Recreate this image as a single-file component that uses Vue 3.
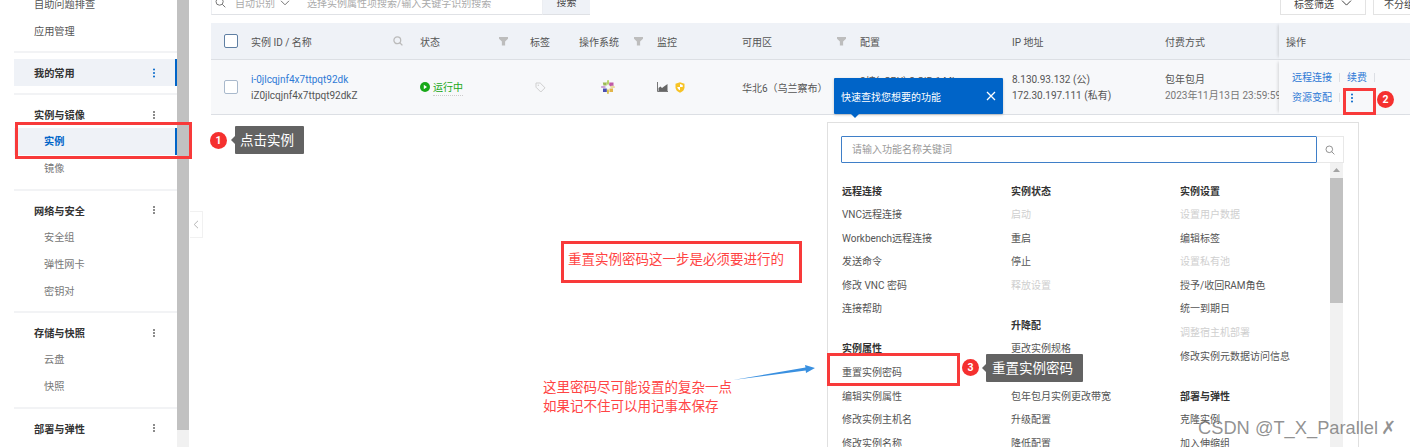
<script setup>
const sideGroups = [
  { items: ['自助问题排查', '应用管理'], plain: true },
  { title: '我的常用', active: true, items: [] },
  { title: '实例与镜像', items: ['实例', '镜像'] },
  { title: '网络与安全', items: ['安全组', '弹性网卡', '密钥对'] },
  { title: '存储与快照', items: ['云盘', '快照'] },
  { title: '部署与弹性', items: [] },
]

const menuColumns = [
  [
    { title: '远程连接', items: [['VNC远程连接'], ['Workbench远程连接'], ['发送命令'], ['修改 VNC 密码'], ['连接帮助']] },
    { title: '实例属性', items: [['重置实例密码'], ['编辑实例属性'], ['修改实例主机名'], ['修改实例名称']] },
  ],
  [
    { title: '实例状态', items: [['启动', true], ['重启'], ['停止'], ['释放设置', true]] },
    { title: '升降配', items: [['更改实例规格'], ['按量转包年包月'], ['包年包月实例更改带宽'], ['升级配置'], ['降低配置']] },
  ],
  [
    { title: '实例设置', items: [['设置用户数据', true], ['编辑标签'], ['设置私有池', true], ['授予/收回RAM角色'], ['统一到期日'], ['调整宿主机部署', true], ['修改实例元数据访问信息']] },
    { title: '部署与弹性', items: [['克隆实例'], ['加入伸缩组']] },
  ],
]
</script>

<template>
  <div class="page">
    <aside class="sidebar">
      <section v-for="(group, i) in sideGroups" :key="i" class="side-group" :class="{ 'is-fav': group.active }">
        <div v-if="group.title" class="side-title" :class="{ active: group.active }">
          <span>{{ group.title }}</span>
          <i class="dots" :class="{ blue: group.active }"></i>
        </div>
        <div
          v-for="item in group.items"
          :key="item"
          class="side-item"
          :class="{ plain: group.plain, current: item === '实例' }"
        >{{ item }}</div>
      </section>
    </aside>
    <div class="side-scroll"><div class="side-thumb"></div></div>
    <div class="gutter">
      <div class="collapse">
        <svg width="6" height="9" viewBox="0 0 6 9"><path d="M5 .8 1.2 4.5 5 8.2" fill="none" stroke="#b5b5b5" /></svg>
      </div>
    </div>

    <main class="main">
      <div class="toolbar">
        <div class="search-box">
          <svg width="11" height="11" viewBox="0 0 11 11"><circle cx="4.6" cy="4.6" r="3.6" fill="none" stroke="#777" /><path d="m7.3 7.3 3 3" stroke="#777" /></svg>
          <span class="search-kind">自动识别</span>
          <svg width="10" height="6" viewBox="0 0 10 6"><path d="m1 .8 4 4 4-4" fill="none" stroke="#777" /></svg>
          <span class="search-hint">选择实例属性项搜索/输入关键字识别搜索</span>
        </div>
        <div class="search-btn">搜索</div>
        <div class="tool-right">
          <div class="tool-btn tag-filter">
            标签筛选
            <svg width="11" height="6" viewBox="0 0 11 6"><path d="m1 .6 4.5 4.5L10 .6" fill="none" stroke="#444" /></svg>
          </div>
          <div class="tool-btn group-btn">不分组</div>
        </div>
      </div>

      <div class="table">
        <div class="t-row t-head">
          <div class="cell c-check"><i class="check"></i></div>
          <div class="cell c-id">
            <span>实例 ID / 名称</span>
            <svg class="head-icon" width="10" height="10" viewBox="0 0 10 10"><circle cx="4.3" cy="4.3" r="3.4" fill="none" stroke="#bbb" stroke-width="1.3" /><path d="m6.8 6.8 2.6 2.6" stroke="#bbb" stroke-width="1.3" /></svg>
          </div>
          <div class="cell c-status"><span>状态</span><i class="funnel"></i></div>
          <div class="cell c-tag">标签</div>
          <div class="cell c-os"><span>操作系统</span><i class="funnel"></i></div>
          <div class="cell c-mon">监控</div>
          <div class="cell c-zone"><span>可用区</span><i class="funnel"></i></div>
          <div class="cell c-conf">配置</div>
          <div class="cell c-ip">IP 地址</div>
          <div class="cell c-pay">付费方式</div>
          <div class="cell c-ops">操作</div>
        </div>
        <div class="t-row t-body">
          <div class="cell c-check"><i class="check light"></i></div>
          <div class="cell c-id stack">
            <a class="link">i-0jlcqjnf4x7ttpqt92dk</a>
            <span>iZ0jlcqjnf4x7ttpqt92dkZ</span>
          </div>
          <div class="cell c-status">
            <span class="running">
              <svg width="10" height="10" viewBox="0 0 10 10"><circle cx="5" cy="5" r="5" fill="#18a818" /><path d="M3.8 2.8 7 5 3.8 7.2z" fill="#fff" /></svg>
              <span class="run-text">运行中</span>
            </span>
          </div>
          <div class="cell c-tag">
            <svg width="11" height="11" viewBox="0 0 11 11"><path d="M1 1h4.2L10 5.8 5.8 10 1 5.2z" fill="none" stroke="#cfcfcf" /><circle cx="3.3" cy="3.3" r=".7" fill="#cfcfcf" /></svg>
          </div>
          <div class="cell c-os os-cell">
            <svg width="14" height="14" viewBox="0 0 14 14">
              <path d="M6.500 0h1.200l.6 3L7 5.500 5.600 3z" fill="#b9d36a" />
              <path d="M8.500 2.500h4v4h-3l-1.500-1.500z" fill="#c05aa8" />
              <path d="M14 6.500v1.200l-3 .6L8.500 7l2.500-1.400z" fill="#e8dca0" />
              <path d="M8.500 8.500h3.500v3.500h-3.500z" fill="#e2b54a" />
              <path d="M6.300 14h1.300l.4-3L7 8.500 5.800 11z" fill="#d8c24a" />
              <path d="M2 8.500h3.800v3.500H2z" fill="#4a4fb0" />
              <path d="M0 6.300v1.400l3 .5L5.500 7 3 5.700z" fill="#c9a0d8" />
              <path d="M1.800 2.500h3.800v3H2.500z" fill="#9cba55" />
            </svg>
          </div>
          <div class="cell c-mon mon-cell">
            <svg width="11" height="10" viewBox="0 0 11 10"><path d="M.5 0v9.500H11" fill="none" stroke="#777" /><path d="M1.500 9 1.500 6 3.500 4.500 5 6l2-1.500L10.500 2v7z" fill="#666" /></svg>
            <svg width="10" height="11" viewBox="0 0 10 11"><path d="M5 .3 9.500 1.800v3.400c0 2.700-2 4.500-4.500 5.500C2.500 9.700.5 7.900.5 5.200V1.800z" fill="#f7c325" /><path d="M5 2v3H2.300c.1 1.400 1.100 2.500 2.700 3.300V5h2.700V3z" fill="#fff" /></svg>
          </div>
          <div class="cell c-zone">
            华北6（乌兰察布）
            <svg class="zone-icon" width="9" height="9" viewBox="0 0 9 9"><circle cx="4.500" cy="4.500" r="3.500" fill="none" stroke="#999" /></svg>
          </div>
          <div class="cell c-conf conf-cell">2核(vCPU) 2 GiB 1 Mbps</div>
          <div class="cell c-ip stack">
            <span>8.130.93.132 (公)</span>
            <span>172.30.197.111 (私有)</span>
          </div>
          <div class="cell c-pay stack">
            <span>包年包月</span>
            <span class="nowrap">2023年11月13日 23:59:59 到期</span>
          </div>
          <div class="cell c-ops ops-cell">
            <div class="ops-line"><a class="link">远程连接</a><i class="sep"></i><a class="link">续费</a><i class="sep"></i></div>
            <div class="ops-line"><a class="link">资源变配</a><i class="sep"></i><i class="dots blue more"></i></div>
          </div>
        </div>
      </div>
    </main>

    <div class="tour">
      <span>快速查找您想要的功能</span>
      <svg width="10" height="10" viewBox="0 0 10 10"><path d="m1 1 8 8M9 1 1 9" stroke="#fff" stroke-width="1.300" /></svg>
    </div>

    <div class="menu">
      <div class="menu-search">
        <div class="menu-input">请输入功能名称关键词</div>
        <div class="menu-search-btn">
          <svg width="10" height="10" viewBox="0 0 10 10"><circle cx="4.300" cy="4.300" r="3.300" fill="none" stroke="#777" stroke-width=".8" /><path d="m6.700 6.700 2.700 2.700" stroke="#777" stroke-width=".8" /></svg>
        </div>
      </div>
      <div class="menu-body">
        <div class="menu-cols">
          <div v-for="(column, i) in menuColumns" :key="i" class="menu-col">
            <div v-for="block in column" :key="block.title" class="menu-block">
              <div class="menu-title">{{ block.title }}</div>
              <div
                v-for="entry in block.items"
                :key="entry[0]"
                class="menu-item"
                :class="{ disabled: entry[1] }"
              >{{ entry[0] }}</div>
            </div>
          </div>
        </div>
        <div class="menu-scroll">
          <svg width="7" height="4" viewBox="0 0 7 4"><path d="M3.500 0 7 4H0z" fill="#a3a3a3" /></svg>
          <div class="menu-thumb"></div>
        </div>
      </div>
    </div>

    <!-- 标注层 -->
    <div class="mark box-instance"></div>
    <div class="mark box-more"></div>
    <div class="mark box-reset"></div>
    <div class="mark box-note">重置实例密码这一步是必须要进行的</div>
    <div class="badge b1">1</div>
    <div class="badge b2">2</div>
    <div class="badge b3">3</div>
    <div class="tip t1">点击实例</div>
    <div class="tip t3">重置实例密码</div>
    <div class="note">这里密码尽可能设置的复杂一点<br />如果记不住可以用记事本保存</div>
    <svg class="arrow" width="90" height="20" viewBox="0 0 90 20">
      <path d="M1 16 73.500 3.500 73 1l10 3-9 5-.300-2.500z" fill="#3a90e0" />
    </svg>
    <div class="watermark">CSDN @T_X_Parallel<span class="wm-x">✗</span></div>
  </div>
</template>

<style>
html,
body {
  margin: 0;
  background: #fff;
}
</style>

<style scoped>
.page {
  position: relative;
  display: flex;
  width: 1410px;
  height: 447px;
  overflow: hidden;
  font-family: Roboto, "Noto Sans CJK SC", sans-serif;
  font-size: 10px;
  color: #555;
  background: #fff;
}

.sidebar {
  flex: none;
  width: 177px;
  margin-top: -9px;
  box-sizing: border-box;
}

.side-group {
  padding: 6px 0 6.500px;
  margin-left: 14px;
  border-bottom: 2px solid #f2f3f5;
}

.side-group:first-child {
  padding-top: 0;
  padding-bottom: 6px;
}

.side-group.is-fav {
  padding-top: 6px;
  padding-bottom: 7px;
}

.side-group:last-child {
  border-bottom: 0;
}

.side-title {
  display: flex;
  align-items: center;
  justify-content: space-between;
  height: 27px;
  padding: 0 22px 0 20px;
  font-size: 10.2px;
  font-weight: 700;
  color: #333;
}

.side-title.active {
  background: #eff2f7;
  border-right: 2px solid #0064c8;
  padding-right: 20px;
}

.side-item {
  height: 27px;
  line-height: 27px;
  padding-left: 30px;
  font-size: 10.2px;
  color: #777;
}

.side-item.plain {
  padding-left: 20px;
  color: #555;
}

.side-item.current {
  background: #eff2f7;
  border-right: 2px solid #0064c8;
  color: #0064c8;
  font-weight: 700;
}

.dots {
  display: inline-block;
  width: 2px;
  height: 2px;
  border-radius: 50%;
  background: #666;
  box-shadow: 0 -3px 0 #666, 0 3px 0 #666;
}

.dots.blue {
  background: #0064c8;
  box-shadow: 0 -3.500px 0 #0064c8, 0 3.500px 0 #0064c8;
}

.side-scroll {
  flex: none;
  width: 12px;
  background: #f1f1f1;
}

.side-thumb {
  height: 430px;
  background: #c1c1c1;
}

.gutter {
  flex: none;
  width: 22px;
  padding-top: 211px;
  box-sizing: border-box;
}

.collapse {
  display: flex;
  align-items: center;
  justify-content: center;
  width: 13px;
  height: 27px;
  margin-left: 1px;
  border: 1px solid #f1f1f1;
  border-left: 0;
  box-sizing: border-box;
}

.main {
  flex: none;
  width: 1199px;
  margin-top: -9px;
}

.toolbar {
  display: flex;
  height: 24px;
  margin-bottom: 8px;
}

.search-box {
  display: flex;
  align-items: center;
  width: 332px;
  padding-left: 3px;
  box-sizing: border-box;
  border: 1px solid #eceef2;
  border-top: 0;
  border-bottom-color: #e0e2e6;
  color: #aaa;
}

.search-kind {
  margin: 0 5px 0 9px;
}

.search-hint {
  margin-left: 17px;
}

.search-btn {
  width: 47px;
  line-height: 24px;
  text-align: center;
  background: #eff2f7;
  border-bottom: 1px solid #dfe1e5;
  box-sizing: border-box;
  color: #444;
}

.tool-right {
  display: flex;
  gap: 7px;
  margin-left: auto;
}

.tool-btn {
  display: flex;
  align-items: center;
  height: 24px;
  border: 1px solid #e3e3e3;
  box-sizing: border-box;
  color: #444;
}

.tag-filter {
  gap: 7px;
  width: 86px;
  padding-left: 13px;
}

.group-btn {
  width: 50px;
  padding-left: 10px;
  margin-right: -13px;
}

.t-row {
  display: grid;
  grid-template-columns: 40px 169px 110px 49px 78px 85px 118px 152px 153px 114px 131px;
  border-bottom: 1px solid #dcdfe4;
}

.t-head {
  height: 37px;
  background: #eff2f7;
  box-sizing: border-box;
}

.t-body {
  height: 55px;
  background: #f7f8fa;
  box-sizing: border-box;
}

.cell {
  display: flex;
  align-items: center;
  min-width: 0;
}

.c-check {
  padding-left: 13px;
}

.c-id {
  justify-content: space-between;
  padding-right: 17px;
}

.c-status {
  justify-content: space-between;
  padding-right: 22px;
}

.c-os {
  justify-content: space-between;
  padding-right: 14px;
}

.c-zone {
  justify-content: space-between;
  padding-right: 14px;
}

.t-body .c-zone {
  white-space: nowrap;
  justify-content: flex-start;
}

.zone-icon {
  flex: none;
  margin-left: 9px;
}

.check {
  display: block;
  width: 14px;
  height: 14px;
  box-sizing: border-box;
  background: #fff;
  border: 1px solid #5f7fa3;
  border-radius: 2px;
}

.check.light {
  border-color: #a9b9cc;
}

.funnel {
  display: block;
  width: 9px;
  height: 9px;
  background: #bdbdbd;
  clip-path: polygon(0 0, 100% 0, 100% 25%, 68% 55%, 68% 100%, 32% 100%, 32% 55%, 0 25%);
}

.stack {
  flex-direction: column;
  align-items: flex-start;
  justify-content: center;
  gap: 3px;
  line-height: 13px;
}

.t-body .cell {
  overflow: hidden;
}

.nowrap {
  white-space: nowrap;
  color: #777;
}

.link {
  color: #2f7ad6;
}

.running {
  display: flex;
  align-items: center;
  gap: 3px;
  color: #18a818;
}

.run-text {
  border-bottom: 1px dotted #ccc;
  padding-bottom: 1px;
}

.c-tag {
  padding-left: 5px;
}

.t-head .c-tag {
  padding-left: 0;
}

.os-cell {
  padding-left: 22px;
  justify-content: flex-start;
}

.mon-cell {
  gap: 7px;
}

.conf-cell {
  align-items: flex-start;
  padding-top: 13px;
  white-space: nowrap;
}

.c-ops {
  padding-left: 7px;
  box-shadow: -3px 0 3px -2px rgba(0, 0, 0, 0.14);
  position: relative;
}

.t-body .c-ops {
  overflow: visible;
}

.ops-cell {
  flex-direction: column;
  align-items: flex-start;
  justify-content: center;
  gap: 8px;
  padding-left: 13px;
  padding-top: 1px;
  background: #f7f8fa;
  box-sizing: border-box;
}

.ops-line {
  display: flex;
  align-items: center;
  line-height: 12px;
}

.sep {
  width: 1px;
  height: 9px;
  margin: 0 7px;
  background: #dcdfe4;
}

.more {
  margin-left: 4px;
}

.tour {
  position: absolute;
  left: 834px;
  top: 78px;
  display: flex;
  align-items: center;
  justify-content: space-between;
  width: 169px;
  height: 36px;
  padding: 0 7px;
  box-sizing: border-box;
  background: #0064c8;
  color: #fff;
  border-radius: 1px;
  box-shadow: 0 1px 3px rgba(0, 0, 0, 0.2);
}

.tour::after {
  content: "";
  position: absolute;
  left: 17px;
  bottom: -4px;
  border: 4px solid transparent;
  border-top-color: #0064c8;
  border-bottom: 0;
}

.menu {
  position: absolute;
  left: 827px;
  top: 122px;
  width: 532px;
  height: 340px;
  box-sizing: border-box;
  padding: 13px 14px 0 13px;
  background: #fff;
  border: 1px solid #e0e0e0;
}

.menu-search {
  display: flex;
  height: 27px;
  width: 503px;
}

.menu-input {
  width: 476px;
  line-height: 25px;
  padding-left: 10px;
  box-sizing: border-box;
  border: 1px solid #3f7fc8;
  border-radius: 1px;
  color: #999;
}

.menu-search-btn {
  display: flex;
  align-items: center;
  justify-content: center;
  flex: 1;
  border: 1px solid #e8e8e8;
  border-left: 0;
}

.menu-body {
  display: flex;
  width: 503px;
}

.menu-cols {
  display: flex;
  width: 490px;
  padding-top: 16.500px;
}

.menu-col {
  flex: none;
  width: 169px;
  padding-left: 1px;
  box-sizing: border-box;
}

.menu-block + .menu-block {
  margin-top: 16.400px;
}

.menu-title,
.menu-item {
  height: 23.600px;
  line-height: 23.600px;
  white-space: nowrap;
}

.menu-title {
  font-weight: 700;
  color: #333;
}

.menu-item {
  color: #555;
}

.menu-item.disabled {
  color: #cfcfcf;
}

.menu-scroll {
  flex: none;
  width: 13px;
  height: 300px;
  background: #f1f1f1;
  margin-left: -1px;
  display: flex;
  flex-direction: column;
  align-items: center;
  padding-top: 5px;
  box-sizing: border-box;
}

.menu-thumb {
  flex: none;
  width: 100%;
  height: 125px;
  margin-top: 6px;
  background: #c1c1c1;
}

.mark {
  position: absolute;
  box-sizing: border-box;
  border: 3px solid #f83a3a;
}

.box-instance {
  left: 15px;
  top: 122px;
  width: 177px;
  height: 37px;
  border-width: 3.500px;
}

.box-more {
  left: 1343px;
  top: 88px;
  width: 33px;
  height: 27px;
}

.box-reset {
  left: 827px;
  top: 353px;
  width: 133px;
  height: 33px;
}

.box-note {
  left: 561px;
  top: 241px;
  width: 241px;
  height: 42px;
  padding: 5px 0 0 4px;
  font-size: 13.500px;
  line-height: 20px;
  color: #f44;
  white-space: nowrap;
}

.badge {
  position: absolute;
  width: 17px;
  height: 17px;
  border-radius: 50%;
  background: #f5302f;
  color: #fff;
  font-size: 10.500px;
  font-weight: 700;
  line-height: 17px;
  text-align: center;
}

.b1 {
  left: 210px;
  top: 132px;
}

.b2 {
  left: 1377px;
  top: 91px;
}

.b3 {
  left: 962px;
  top: 359px;
}

.tip {
  position: absolute;
  box-sizing: border-box;
  background: #636363;
  color: #fff;
  font-size: 13.500px;
  border-radius: 1px;
  white-space: nowrap;
}

.tip::before {
  content: "";
  position: absolute;
  left: -4px;
  top: 50%;
  margin-top: -4px;
  border: 4px solid transparent;
  border-right-color: #636363;
  border-left: 0;
}

.t1 {
  left: 235px;
  top: 126px;
  width: 69px;
  height: 28px;
  line-height: 28px;
  padding-left: 5px;
}

.t3 {
  left: 986px;
  top: 354px;
  width: 97px;
  height: 28px;
  line-height: 28px;
  padding-left: 6px;
}

.note {
  position: absolute;
  left: 543px;
  top: 378px;
  font-size: 13.500px;
  line-height: 19px;
  color: #f44;
  white-space: nowrap;
}

.arrow {
  position: absolute;
  left: 732px;
  top: 364px;
}

.watermark {
  position: absolute;
  left: 1198px;
  top: 416px;
  font-family: "Liberation Sans", sans-serif;
  font-size: 18.300px;
  line-height: 24px;
  color: rgba(110, 110, 110, 0.75);
  white-space: nowrap;
}

.wm-x {
  font-family: "DejaVu Sans", sans-serif;
  margin-left: 3px;
}
</style>
